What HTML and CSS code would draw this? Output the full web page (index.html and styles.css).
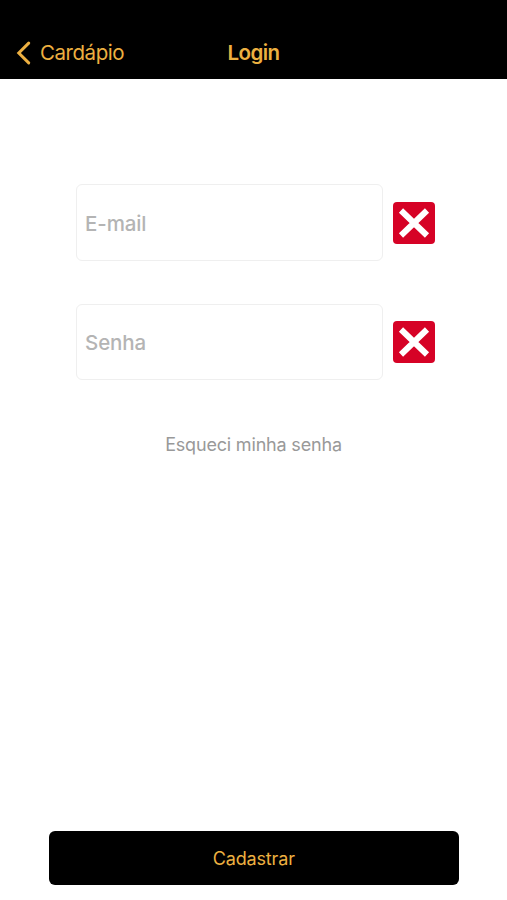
FILE: index.html
```html
<!DOCTYPE html>
<html lang="pt-BR">
<head>
<meta charset="utf-8">
<title>Login</title>
<link rel="stylesheet" href="styles.css">
</head>
<body>
<header class="navbar">
  <a class="back"><svg class="chevron" viewBox="0 0 14 24"><path d="M12.7 2.1 2.8 12l9.9 9.9"/></svg><span class="back-label">Cardápio</span></a>
  <h1 class="title">Login</h1>
</header>
<main class="content">
  <form class="form">
    <div class="row">
      <div class="field email"><span class="label">E-mail</span></div>
      <svg class="cross" viewBox="0 0 42 42"><rect width="42" height="42" rx="4"/><path d="M8 8.5l26 25M34 8.5l-26 25"/></svg>
    </div>
    <div class="row">
      <div class="field"><span class="label">Senha</span></div>
      <svg class="cross" viewBox="0 0 42 42"><rect width="42" height="42" rx="4"/><path d="M8 8.5l26 25M34 8.5l-26 25"/></svg>
    </div>
  </form>
  <a class="forgot">Esqueci minha senha</a>
</main>
<footer class="footer"><div class="register"><span class="register-label">Cadastrar</span></div></footer>
</body>
</html>
```

FILE: styles.css
```css
* { box-sizing: border-box; }
body { margin: 0; height: 900px; display: flex; flex-direction: column; background: #fff; font-family: Inter, "Liberation Sans", sans-serif; overflow: hidden; }
.navbar { height: 79px; padding: 26px 16px 0; background: #000; color: #edb041; display: grid; grid-template-columns: 1fr auto 1fr; align-items: center; }
.back { display: flex; align-items: center; gap: 10px; font-size: 20.5px; }
.back-label { letter-spacing: -0.45px; }
.chevron { width: 14px; height: 24px; fill: none; stroke: currentColor; stroke-width: 3; stroke-linecap: round; stroke-linejoin: miter; overflow: visible; }
.title { margin: 0; font-size: 20.5px; font-weight: 600; letter-spacing: -0.55px; }
.content { flex: 1; display: flex; flex-direction: column; align-items: center; }
.form { align-self: stretch; padding: 105px 0 0 76px; display: flex; flex-direction: column; gap: 43px; }
.row { display: flex; align-items: center; gap: 10px; }
.row + .row { height: 76px; }
.field { width: 307px; height: 77px; padding-left: 8px; border: 1px solid #efefef; border-radius: 6px; display: flex; align-items: center; }
.row + .row .field { height: 76px; }
.email { padding-top: 1px; }
.label { font-size: 20.5px; font-weight: 500; letter-spacing: -0.1px; color: #b4b4b4; }
.cross { width: 42px; height: 42px; margin-left: 0.4px; fill: #d60226; }
.cross path { stroke: #fff; stroke-width: 6; }
.forgot { margin-top: 54px; font-size: 18px; letter-spacing: -0.18px; color: #999; }
.footer { padding: 0 48.5px 15px 49px; }
.register { height: 54px; border-radius: 6px; background: #000; color: #edb041; font-size: 18px; letter-spacing: -0.15px; display: flex; align-items: center; justify-content: center; }
```
